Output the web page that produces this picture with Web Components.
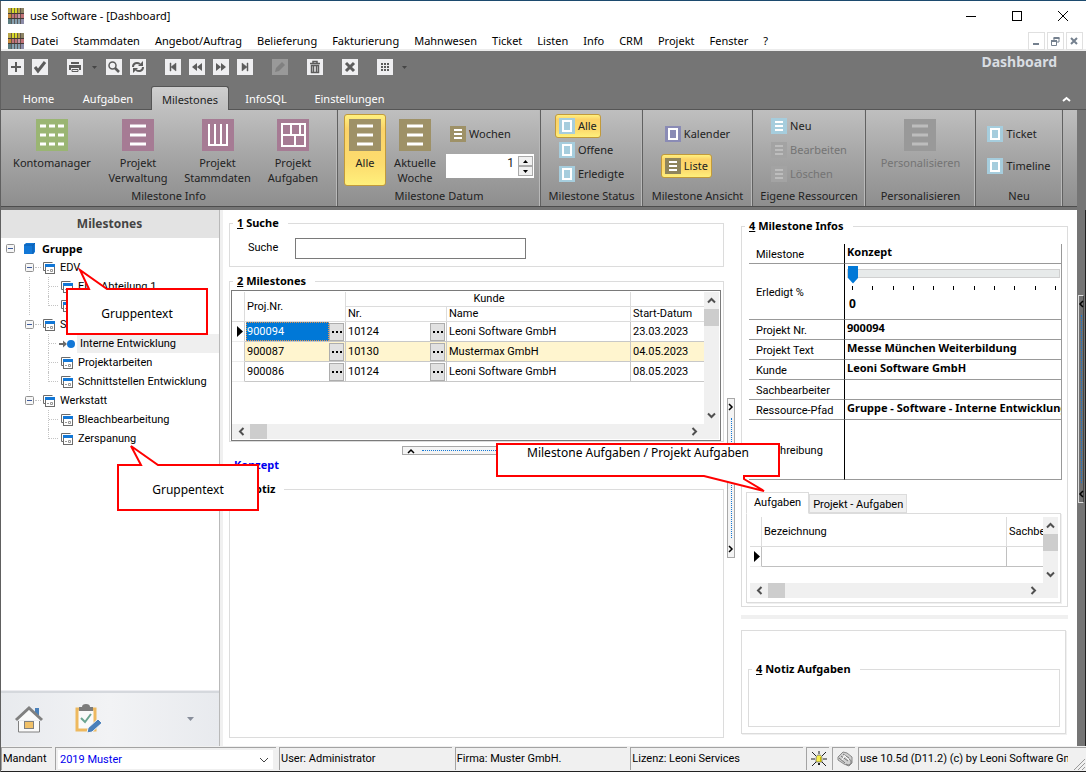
<!DOCTYPE html>
<html lang="de">
<head>
<meta charset="utf-8">
<title>use Software - [Dashboard]</title>
<style>
:root{--ui:"Noto Sans","Open Sans",sans-serif;--data:Roboto,"Noto Sans",sans-serif;--bold:"Noto Sans","Open Sans",sans-serif}
html,body{margin:0;min-height:100%}
body{font:11px/16px var(--data);color:#000;background:#fff}
</style>
</head>
<body>
<app-window></app-window>
<script>
const RESET = `*{box-sizing:border-box}button,input,select{font:inherit;color:inherit;margin:0;padding:0;border:0;background:none;border-radius:0}button{display:inline-flex;align-items:center;justify-content:center}svg{display:block;flex:none}`;
function define(name, css, html) {
  customElements.define(name, class extends HTMLElement {
    constructor() {
      super();
      this.attachShadow({ mode: 'open' }).innerHTML =
        `<style>${RESET}${css}</style>` + (typeof html === 'function' ? html(this) : html);
    }
  });
}

/* ---------- icons ---------- */
const svg = (w, h, body, extra = '') => `<svg width="${w}" height="${h}" viewBox="0 0 ${w} ${h}" aria-hidden="true" ${extra}>${body}</svg>`;
const LOGO = svg(16, 16, `
  <rect width="16" height="16" fill="#8a7a6c"/>
  <path d="M0 0h16v5H0z" fill="#b8a548"/><path d="M4 0h5v5H4z" fill="#d9d92a"/><path d="M12 0h4v5h-4z" fill="#8d8465"/>
  <path d="M0 6h16v4H0z" fill="#c07278"/><path d="M0 6h4v4H0z" fill="#c78a3c"/><path d="M9 6h3v4H9z" fill="#c792a5"/>
  <path d="M0 11h16v5H0z" fill="#86a0b0"/><path d="M0 11h3v5H0z" fill="#5c7e80"/><path d="M12 11h4v5h-4z" fill="#8c8ca8"/>
  <path d="M3.500 0v16M6.500 0v16M9.500 0v16M12.500 0v16" stroke="#4d4641" stroke-opacity=".75"/><path d="M0 5.500h16M0 10.500h16" stroke="#433a36"/>`);
const lines = (s, bg, fg) => s === 32
  ? svg(32, 32, `<rect width="32" height="32" fill="${bg}"/><path d="M8 7h16M8 16h16M8 25h16" stroke="${fg}" stroke-width="3"/>`)
  : svg(16, 16, `<rect width="16" height="16" fill="${bg}"/><path d="M4 4h8M4 8h8M4 12h8" stroke="${fg}" stroke-width="2"/>`);
const square = bg => svg(16, 16, `<rect width="16" height="16" fill="${bg}"/><rect x="4" y="3" width="8" height="10" fill="none" stroke="#fff" stroke-width="2"/>`);
const DIM = '#999', DIMFG = '#bdbdbd';
const ICONS = {
  konto: svg(32, 32, `<rect width="32" height="32" fill="#9ab573"/><path d="M4 7h24M4 16h24M4 25h24" stroke="#fff" stroke-width="3" stroke-dasharray="6 3"/>`),
  verwaltung: lines(32, '#a67b94', '#fff'),
  stammdaten: svg(32, 32, `<rect width="32" height="32" fill="#a67b94"/><path d="M7 5v21h18V5M13 5v20M19 5v20" fill="none" stroke="#fff" stroke-width="2"/>`),
  aufgaben: svg(32, 32, `<rect width="32" height="32" fill="#a67b94"/><path d="M5 5h23v22H5zM5 16h23M14 5v11M23 5v11M18 16v11" fill="none" stroke="#fff" stroke-width="2"/>`),
  olive: lines(32, '#9e9167', '#fff'), olive16: lines(16, '#9e9167', '#fff'), olivedark: lines(16, '#8f855c', '#fff'),
  dim: lines(32, DIM, DIMFG), dim16: lines(16, '#a3a3a3', '#bdbdbd'),
  blue: square('#a6cddd'), violet: square('#8a8bb5'), bluelines: lines(16, '#a6cddd', '#fff')
};
const QI = {
  add: '<path d="M8 3v10M3 8h10" stroke="#5c5c5c" stroke-width="2"/>',
  ok: '<path d="M3 8l3 4 7-9" fill="none" stroke="#5c5c5c" stroke-width="3"/>',
  print: '<path d="M4 3h8v2H4zM2 6h12v5h-2V9H4v2H2z" fill="#5c5c5c"/><path d="M5 10.500h6v2H5z" fill="none" stroke="#5c5c5c"/>',
  find: '<circle cx="6.500" cy="6.500" r="3.500" fill="none" stroke="#5c5c5c" stroke-width="1.500"/><path d="M9 9l4 4" stroke="#5c5c5c" stroke-width="2.500"/>',
  refresh: '<path d="M3 8c0-4 4-5 7-3M13 8c0 4-4 5-7 3" fill="none" stroke="#5c5c5c" stroke-width="2"/><path d="M13 2v5H8zM3 14V9h5z" fill="#5c5c5c"/>',
  first: '<path d="M5 4h1v8H5zM11 4v8L6 8z" fill="#5c5c5c" stroke="#5c5c5c" stroke-width=".5"/>',
  prev: '<path d="M8 4v8L3 8zM13 4v8L8 8z" fill="#5c5c5c"/>',
  next: '<path d="M3 4v8l5-4zM8 4v8l5-4z" fill="#5c5c5c"/>',
  last: '<path d="M10 4h1v8h-1zM5 4v8l5-4z" fill="#5c5c5c" stroke="#5c5c5c" stroke-width=".5"/>',
  edit: '<path d="M3 13l1-4 6-6 3 3-6 6z" fill="#808080"/>',
  trash: '<path d="M3 4.500h10M6 4V2.500h4V4M4.500 6.500h7v7h-7zM6.500 7v6M9.500 7v6" fill="none" stroke="#5c5c5c" stroke-width="1.500"/>',
  del: '<path d="M4 4l8 8M12 4l-8 8" stroke="#5c5c5c" stroke-width="3"/>',
  grid: '<path d="M4 4h2v2H4zM7 4h2v2H7zM10 4h2v2h-2zM4 7h2v2H4zM7 7h2v2H7zM10 7h2v2h-2zM4 10h2v2H4zM7 10h2v2H7zM10 10h2v2h-2z" fill="#5c5c5c"/>'
};
const quick = (n, t, off = false) => `<button aria-label="${t}" ${off ? 'disabled' : ''}>${svg(16, 16, `<rect width="16" height="16" fill="${off ? '#999' : '#efeff1'}"/>${QI[n]}`)}</button>`;
const CARET = '<button aria-label="Auswahl">' + svg(7, 16, '<path d="M1 7h5L3.500 10z" fill="#454545"/>') + '</button>';
const chev = (dir, color = '#505050') => svg(9, 9, `<path d="M1 6.500L4.500 3 8 6.500" fill="none" stroke="${color}" stroke-width="2" transform="rotate(${{ up: 0, right: 90, down: 180, left: 270 }[dir]} 4.500 4.500)"/>`);
const WINICON = svg(12, 12, '<path d="M.5 8.500v-8h9M.5 8.500h2" fill="none" stroke="#6b6b6b"/><rect x="2.500" y="2.500" width="9" height="9" fill="#fff" stroke="#6b6b6b"/><path d="M2 2h10v3H2z" fill="#1277d6"/><path d="M4 8.500h2M7.500 7.500h2v2h-2z" fill="none" stroke="#999"/>');

/* ---------- window chrome ---------- */
define('title-bar', `
  :host{display:flex;align-items:center;height:30px;padding:0 0 0 8px;background:#fff;font:11px/16px var(--ui)}
  h1{font:inherit;margin:0;padding-left:6px;flex:1}
  button{width:46px;height:30px}`,
  `${LOGO}<h1>use Software - [Dashboard]</h1>
  <button aria-label="Minimieren">${svg(12, 12, '<path d="M1 6.500h10" stroke="#000"/>')}</button>
  <button aria-label="Maximieren">${svg(12, 12, '<rect x="1.500" y="1.500" width="9" height="9" fill="none" stroke="#000"/>')}</button>
  <button aria-label="Schließen">${svg(12, 12, '<path d="M1 1l10 10M11 1L1 11" stroke="#000"/>')}</button>`);

define('menu-bar', `
  :host{display:flex;align-items:center;height:20px;padding:2px 3px 0 8px;border-bottom:2px solid #ececec;background:#fff;font:11px/16px var(--ui);white-space:nowrap}
  nav{display:flex;flex:1;gap:15px;padding-left:7px}
  .mdi{display:flex;gap:2px}.mdi button{width:17px;height:18px;border:1px solid #e0e0e0}`,
  `${LOGO}<nav>${['Datei', 'Stammdaten', 'Angebot/Auftrag', 'Belieferung', 'Fakturierung', 'Mahnwesen', 'Ticket', 'Listen', 'Info', 'CRM', 'Projekt', 'Fenster', '?'].map(t => `<button>${t}</button>`).join('')}</nav>
  <div class="mdi"><button aria-label="Minimieren">${svg(9, 9, '<path d="M1 7h6" stroke="#74808e" stroke-width="2"/>')}</button>
  <button aria-label="Wiederherstellen">${svg(9, 9, '<path d="M3 3V1h5v4H6" fill="none" stroke="#74808e"/><path d="M.5 4h5v4.500h-5z" fill="none" stroke="#74808e"/><path d="M0 4h6M2.500 1h6" stroke="#74808e" stroke-width="2"/>')}</button>
  <button aria-label="Schließen">${svg(9, 9, '<path d="M1 1l6 6M7 1L1 7" stroke="#74808e" stroke-width="2"/>')}</button></div>`);

define('quick-bar', `
  :host{display:flex;height:35px;padding:8px 29px 0 8px;background:#757575;color:#d9dde2}
  .g{display:flex;gap:8px;margin-right:19px;align-self:flex-start}
  h2{margin:-6px 0 0 auto;font:bold 14px/18px var(--ui)}`,
  `<div class="g">${quick('add', 'Neu')}${quick('ok', 'Speichern')}</div>
  <div class="g">${quick('print', 'Drucken')}${CARET}${quick('find', 'Suchen')}${quick('refresh', 'Aktualisieren')}</div>
  <div class="g">${quick('first', 'Erster')}${quick('prev', 'Zurück')}${quick('next', 'Weiter')}${quick('last', 'Letzter')}</div>
  <div class="g">${quick('edit', 'Bearbeiten', true)}</div><div class="g">${quick('trash', 'Löschen')}</div>
  <div class="g">${quick('del', 'Abbrechen')}</div><div class="g">${quick('grid', 'Raster')}${CARET}</div><h2>Dashboard</h2>`);

define('ribbon-tabs', `
  :host{display:flex;align-items:flex-end;height:24px;padding:0 15px 0 8px;background:#757575;border-bottom:1px solid #555;font:11px/16px var(--ui)}
  button{height:24px;margin-bottom:-1px;padding-top:2px;color:#fff}
  button[aria-selected=true]{color:#222;background:linear-gradient(#cfcfcf,#bebebe);border:1px solid #555;border-bottom:0;border-radius:3px 3px 0 0;margin-left:4px}
  .w60{width:61px}.w80{width:78px}.w78{width:78px}.w74{width:74px}.w92{width:93px}.up{margin-left:auto;width:10px}`,
  `<button class="w60" role="tab">Home</button><button class="w80" role="tab">Aufgaben</button><button class="w78" role="tab" aria-selected="true">Milestones</button><button class="w74" role="tab">InfoSQL</button><button class="w92" role="tab">Einstellungen</button>
  <button class="up" aria-label="Menüband einklappen">${svg(9, 9, '<path d="M1 6l3.500-3L8 6" fill="none" stroke="#fff" stroke-width="2"/>')}</button>`);

/* ---------- ribbon ---------- */
define('ribbon-button', `
  :host{display:block}
  button{font:11px/16px var(--ui);color:#222;white-space:nowrap;border:1px solid transparent;border-radius:3px}
  :host([big]) button{flex-direction:column;justify-content:flex-start;height:72px;width:100%;padding-top:4px}
  :host([big]) span{padding-top:4px;line-height:15px}
  :host(:not([big])) button{height:24px;padding:0 3px;gap:3px}
  :host([active]) button{background:linear-gradient(#fff17f,#fcd369 20%,#fcdc6e 70%,#fff07c);border-color:#c29a3a}
  button:disabled{color:#747474}`,
  el => `<button ${el.hasAttribute('off') ? 'disabled' : ''}>${ICONS[el.getAttribute('icon')]}<span><slot></slot></span></button>`);

define('ribbon-group', `
  :host{display:flex;flex-direction:column;border-right:1px solid #616161;box-shadow:inset -1px 0 #b9b9b9;font:11px/16px var(--ui);color:#222;flex:none;white-space:nowrap}
  :host(:last-child){flex:1;border:0;box-shadow:none}
  .body{display:flex;flex:1;justify-content:center;padding-top:4px}
  footer{text-align:center;height:18px}`,
  el => `<div class="body"><slot></slot></div><footer>${el.getAttribute('label') || ''}</footer>`);

define('ribbon-bar', `
  :host{display:flex;height:97px;background:linear-gradient(#bfbfbf,#a2a2a2 55%,#8e8e8e);border-bottom:1px solid #4d4d4d;font:11px/16px var(--ui);margin-bottom:3px}
  .stack{display:flex;flex-direction:column}
  .two{gap:8px;padding-top:8px}
  .datum{padding:8px 0 0 2px;gap:8px}
  .spin{display:flex;width:88px;height:24px;background:#fff;font:11px/16px var(--data)}
  .spin input{flex:1;min-width:0;text-align:right;height:18px;padding-right:4px;appearance:textfield;outline:0;font-size:12px}
  input::-webkit-inner-spin-button{display:none}
  .arrows{display:flex;flex-direction:column;padding:2px 1px 0 0}
  .arrows button{width:15px;height:10px;border:1px solid #aaa;background:#f0f0f0}
  .w338{width:338px}.w203{width:203px}.w102{width:102px}.w110{width:110px}.w113{width:113px}.w111{width:110px}.w87{width:87px}
  .b1{width:90px}.b2{width:82px}.b3{width:77px}.b4{width:74px}.b5{width:42px}.b6{width:58px}`,
  `<ribbon-group class="w338" label="Milestone Info">
    <ribbon-button big class="b1" icon="konto">Kontomanager</ribbon-button><ribbon-button big class="b2" icon="verwaltung">Projekt<br>Verwaltung</ribbon-button><ribbon-button big class="b3" icon="stammdaten">Projekt<br>Stammdaten</ribbon-button><ribbon-button big class="b4" icon="aufgaben">Projekt<br>Aufgaben</ribbon-button></ribbon-group>
  <ribbon-group class="w203" label="Milestone Datum">
    <ribbon-button big active class="b5" icon="olive">Alle</ribbon-button><ribbon-button big class="b6" icon="olive">Aktuelle<br>Woche</ribbon-button>
    <div class="stack datum"><ribbon-button icon="olive16">Wochen</ribbon-button>
    <div class="spin"><input type="number" value="1" aria-label="Wochen"><div class="arrows"><button aria-label="Mehr">${svg(5, 3, '<path d="M0 3h5L2.500 0z"/>')}</button><button aria-label="Weniger">${svg(5, 3, '<path d="M0 0h5L2.500 3z"/>')}</button></div></div></div></ribbon-group>
  <ribbon-group class="w102" label="Milestone Status"><div class="stack"><ribbon-button active icon="blue">Alle</ribbon-button><ribbon-button icon="blue">Offene</ribbon-button><ribbon-button icon="blue">Erledigte</ribbon-button></div></ribbon-group>
  <ribbon-group class="w110" label="Milestone Ansicht"><div class="stack two"><ribbon-button icon="violet">Kalender</ribbon-button><ribbon-button active icon="olivedark">Liste</ribbon-button></div></ribbon-group>
  <ribbon-group class="w113" label="Eigene Ressourcen"><div class="stack"><ribbon-button icon="bluelines">Neu</ribbon-button><ribbon-button off icon="dim16">Bearbeiten</ribbon-button><ribbon-button off icon="dim16">Löschen</ribbon-button></div></ribbon-group>
  <ribbon-group class="w111" label="Personalisieren"><ribbon-button big off icon="dim">Personalisieren</ribbon-button></ribbon-group>
  <ribbon-group class="w87" label="Neu"><div class="stack two"><ribbon-button icon="blue">Ticket</ribbon-button><ribbon-button icon="blue">Timeline</ribbon-button></div></ribbon-group>
  <ribbon-group></ribbon-group>`);

/* ---------- sidebar ---------- */
const ROWS = [[0, 'Gruppe', 'root'], [1, 'EDV', 'node'], [2, 'EDV Abteilung 1'], [2, 'EDV Abteilung 2', 'end'], [1, 'Software', 'node'], [2, 'Interne Entwicklung', 'sel'], [2, 'Projektarbeiten'], [2, 'Schnittstellen Entwicklung', 'end'], [1, 'Werkstatt', 'node'], [2, 'Bleachbearbeitung'], [2, 'Zerspanung', 'end']];
const BOX = svg(9, 9, '<rect x=".5" y=".5" width="8" height="8" rx="1" fill="#f6f6f6" stroke="#919191"/><path d="M2 4.500h5" stroke="#3c5a9c"/>');
const treeRow = ([lv, text, kind = ''], i) => {
  if (lv === 0) return `<li class="root">${BOX}${svg(11, 12, '<path d="M0 2l2-2h9v9l-2 2H0z" fill="#1277d6"/><path d="M0 2h9v9M9 2l2-2" fill="none" stroke="#0c5cab"/>')}<b>${text}</b></li>`;
  if (lv === 1) return `<li class="node">${BOX}<i class="h"></i>${WINICON}<span>${text}</span></li>`;
  const ic = kind === 'sel' ? svg(17, 12, '<path d="M0 6h5" stroke="#6b6b6b" stroke-width="2"/><path d="M4 2.500L8 6 4 9.500z" fill="#6b6b6b"/><circle cx="12" cy="6" r="4" fill="#1277d6"/>') : WINICON;
  return `<li class="leaf ${kind}"><i class="${i < 8 ? 'v' : 'v none'}"></i><i class="v2 ${kind === 'end' ? 'half' : ''}"></i><i class="h"></i>${ic}<span>${text}</span></li>`;
};
define('group-tree', `
  :host{display:block;flex:1}
  ul{list-style:none;margin:0;padding:1px 0 0}
  li{display:flex;align-items:center;height:19px;line-height:19px;white-space:nowrap}
  i{align-self:stretch;border-left:1px dotted #c4c4c4}
  .h{align-self:center;width:6px;border:0;border-top:1px dotted #c4c4c4}
  .root{padding-left:6px;gap:9px}.root b{font:bold 11px/19px var(--bold);margin-left:-2px}
  .node{padding-left:25px}.node .h{margin:0 2px 0 1px}.node span{padding-left:5px}
  .leaf{padding-left:29px}.leaf .v2{margin-left:18px}.leaf .h{width:9px;margin-right:3px}.leaf span{padding:0 0 0 3px;margin-left:2px;flex:1}
  .half{align-self:flex-start;height:10px}.none{border-color:transparent}
  .leaf.sel .h{width:7px;margin-right:3px}.leaf.sel span{background:#efefef;margin-left:1px}`,
  `<ul>${ROWS.map(treeRow).join('')}</ul>`);

define('side-panel', `
  :host{display:flex;flex-direction:column;background:#fff;border-right:1px solid #b9b9b9}
  h2{margin:0;height:28px;background:#e3e3e3;font:bold 12px/28px var(--ui);color:#444;text-align:center}
  footer{display:flex;align-items:center;height:56px;padding:0 24px 0 14px;background:linear-gradient(90deg,#e8eaee,#f2f3f5 50%,#e8eaee);border-top:1px solid #ececf0;box-shadow:inset 0 2px #d5d8dd}
  footer button{margin-right:31px}footer button:last-child{margin:0 0 0 auto}`,
  `<h2>Milestones</h2><group-tree></group-tree>
  <footer><button aria-label="Start">${svg(30, 30, '<path d="M21 4h4v7h-4z" fill="#4a80ba"/><path d="M4.500 17v11h21V17" fill="#fafafa" stroke="#808080"/><path d="M2 16L15 4l13 12" fill="#fafafa" stroke="#808080" stroke-width="3"/><rect x="10.500" y="17.500" width="9" height="7" fill="#f0c068" stroke="#808080"/>')}</button>
  <button aria-label="Aufgaben">${svg(28, 30, '<path d="M2 5h18v21H2z" fill="#fafafa" stroke="#eeb95f" stroke-width="3"/><path d="M4 3h3a4 3 0 0 1 8 0h3v4H4z" fill="#7c7c7c"/><path d="M6 14l4 4 6-8" fill="none" stroke="#6ba591" stroke-width="2"/><path d="M13 24l10-9 4 4-10 9-5 1z" fill="#4a80ba" stroke="#f4f5f7"/>')}</button>
  <button aria-label="Weitere">${svg(9, 8, '<path d="M1 2h7L4.500 6z" fill="#888e9b"/>')}</button></footer>`);

/* ---------- framed group with a caption ---------- */
define('group-box', `
  :host{display:flex;flex-direction:column;min-width:0}
  fieldset{flex:1;min-width:0;margin:0;padding:0;border:1px solid #dcdcdc;display:flex;flex-direction:column}
  legend{margin-left:3px;padding:0 9px 0 4px;font:bold 11px/14px var(--bold);height:14px}
  u{text-decoration-thickness:1px;text-underline-offset:1px}`,
  el => `<fieldset><legend><u>${el.getAttribute('num')}</u> ${el.getAttribute('label')}</legend><slot></slot></fieldset>`);

/* ---------- scroll frame shared by both grids ---------- */
define('scroll-frame', `
  :host{display:grid;grid-template-columns:minmax(0,1fr) 15px;grid-template-rows:1fr 15px;background:#fff;padding:1px 1px 1px 0}
  .c{overflow:hidden;min-width:0}
  .v,.h{background:#f0f0f0;display:flex;align-items:center}
  .v{flex-direction:column;padding:4px 0}.h{grid-column:1/3;padding:0 20px 0 5px}
  .v i{width:15px;height:17px;background:#cdcdcd;margin-top:4px}.h i{width:17px;height:15px;background:#cdcdcd;margin-left:4px}
  .v button:last-child{margin:auto 0 0}.h button:last-child{margin:0 0 0 auto}`,
  `<div class="c"><slot></slot></div>
  <div class="v"><button aria-label="Hoch">${chev('up')}</button><i></i><button aria-label="Runter">${chev('down')}</button></div>
  <div class="h"><button aria-label="Links">${chev('left')}</button><i></i><button aria-label="Rechts">${chev('right')}</button></div>`);

const PTR = svg(7, 12, '<path d="M1 0v11l6-5.500z"/>');
const DOTS = '<button aria-label="Auswählen">' + svg(10, 2, '<path d="M0 0h2v2H0zM4 0h2v2H4zM8 0h2v2H8z"/>') + '</button>';
define('milestone-grid', `
  :host{display:block;margin:2px 2px 0 1px;border:1px solid #7a7a7a;height:151px}
  scroll-frame{height:149px}
  table{border-collapse:separate;border-spacing:0;table-layout:fixed;width:100%}
  th,td{padding:0 0 0 2px;text-align:left;font-weight:normal;border-right:1px solid #c8c8c8;border-bottom:1px solid #c8c8c8;white-space:nowrap;overflow:hidden}
  th:last-child,td:last-child{border-right:0}
  th{border-color:#dcdcdc}thead tr:first-child th{height:15px;line-height:14px}thead tr+tr th{height:15px;line-height:14px}
  .mid{text-align:center}
  tbody td{height:20px;line-height:19px}
  td:first-child{padding-left:4px;border-bottom-color:#ececec}
  .alt td+td{background:#fff5cf}
  .f{display:flex;align-items:center;justify-content:space-between;height:19px}
  .f button{width:15px;height:18px;background:#e1e1e1;border:1px solid #adadad;margin-right:1px}
  .on{background:#0078d7;color:#fff;outline:1px dotted #e8954a;outline-offset:-1px;flex:1;height:19px;margin-left:-1px;padding-left:1px}`,
  `<scroll-frame><table><colgroup><col style="width:13px"><col style="width:101px"><col style="width:101px"><col><col style="width:73px"></colgroup>
  <thead><tr><th rowspan="2"></th><th rowspan="2">Proj.Nr.</th><th colspan="2" class="mid">Kunde</th><th></th></tr><tr><th>Nr.</th><th>Name</th><th>Start-Datum</th></tr></thead>
  <tbody>${[['900094', '10124', 'Leoni Software GmbH', '23.03.2023'], ['900087', '10130', 'Mustermax GmbH', '04.05.2023'], ['900086', '10124', 'Leoni Software GmbH', '08.05.2023']].map((r, i) =>
    `<tr class="${i === 1 ? 'alt' : ''}"><td>${i ? '' : PTR}</td><td><div class="f"><span class="${i ? '' : 'on'}">${r[0]}</span>${DOTS}</div></td><td><div class="f"><span>${r[1]}</span>${DOTS}</div></td><td>${r[2]}</td><td>${r[3]}</td></tr>`).join('')}</tbody></table></scroll-frame>`);

define('split-handle', `
  :host{display:flex;align-items:center;justify-content:space-between;background:#f4f4f4;border:1px solid #a8a8a8;width:150px;height:9px}
  :host([vertical]){flex-direction:column;width:8px;height:160px}
  :host([dark]){width:6px;height:208px;background:#707070;border-color:#ddd;border-right-color:#444}
  i{flex:1;align-self:center;border-top:1px dotted #1277d6;margin:0 3px}
  :host([vertical]) i{border:0;border-left:1px dotted #1277d6;margin:3px 0}
  svg{margin:4px}:host([vertical]) svg{margin:4px -2px}`,
  el => { const d = el.hasAttribute('dark') ? 'left' : el.hasAttribute('vertical') ? 'right' : 'up';
    const c = svg(8, 8, `<path d="M1 6l3-3 3 3" fill="none" stroke="#000" stroke-width="1.500" transform="rotate(${{ up: 0, right: 90, left: 270 }[d]} 4 4)"/>`);
    return `${c}<i></i>${c}`; });

/* ---------- detail table with slider ---------- */
define('milestone-info', `
  :host{display:block;margin:11px 5px 0 7px}
  table{width:100%;table-layout:fixed;border-collapse:separate;border-spacing:0;border-right:1px solid #999}
  th,td{border-bottom:1px solid #999;height:20px;padding:0;text-align:left;white-space:nowrap;overflow:hidden}
  th{font-weight:normal;padding:2px 0 0 7px;border-right:1px solid #000}
  td{font:bold 11px/15px var(--bold);padding-left:2px;vertical-align:top}
  .big th,.big td{height:56px}.last th,.last td{height:60px}
  input{display:block;appearance:none;width:100%;height:20px;outline:0;margin-top:1px}
  input::-webkit-slider-runnable-track{height:9px;margin:0 1px 4px 0;background:#e7eaea;border:1px solid #d0d0d0}
  input::-webkit-slider-thumb{appearance:none;width:10px;height:18px;margin-top:-4px;background:#0078d7;clip-path:polygon(0 0,100% 0,100% 70%,50% 100%,0 70%)}
  .ticks{display:flex;justify-content:space-between;padding:1px 5px 6px}.ticks i{width:1px;height:4px;background:#000}
  output{padding-left:2px;font-size:12px}`,
  `<table><colgroup><col style="width:96px"><col></colgroup>
  <tr><th>Milestone</th><td>Konzept</td></tr>
  <tr class="big"><th><label for="s">Erledigt %</label></th><td><input id="s" type="range" min="0" max="100" value="0"><div class="ticks">${'<i></i>'.repeat(11)}</div><output for="s">0</output></td></tr>
  <tr><th>Projekt Nr.</th><td>900094</td></tr><tr><th>Projekt Text</th><td>Messe München Weiterbildung</td></tr>
  <tr><th>Kunde</th><td>Leoni Software GmbH</td></tr><tr><th>Sachbearbeiter</th><td></td></tr>
  <tr><th>Ressource-Pfad</th><td>Gruppe - Software - Interne Entwicklung</td></tr>
  <tr class="last"><th>Beschreibung</th><td></td></tr></table>`);

define('task-tabs', `
  :host{display:block;margin:12px 6px 0 4px}
  .tabs{display:flex;align-items:flex-end;height:21px;position:relative}
  button{border:1px solid #dcdcdc;height:19px;padding:2px 3px 0;background:#f0f0f0}
  button[aria-selected=true]{background:#fff;height:22px;padding:0 7px;border-bottom-color:#fff;margin-bottom:-1px}
  .pane{border:1px solid #dcdcdc;box-shadow:1px 1px #f0f0f0;padding:2px 1px 3px 3px}
  scroll-frame{height:83px}
  table{width:100%;table-layout:fixed;border-collapse:separate;border-spacing:0}
  th,td{padding:0 0 0 2px;text-align:left;font-weight:normal;border-right:1px solid #dcdcdc;border-bottom:1px solid #dcdcdc;white-space:nowrap;overflow:hidden}
  th{height:30px}td{height:20px;border-color:#c0c0c0}td:first-child{padding-left:3px;border-bottom-color:#ececec}th:last-child,td:last-child{border-right:0}
  .c{width:12px}.d{width:36px}`,
  `<div class="tabs" role="tablist"><button role="tab" aria-selected="true">Aufgaben</button><button role="tab">Projekt - Aufgaben</button></div>
  <div class="pane"><scroll-frame><table><colgroup><col class="c"><col><col class="d"></colgroup><tr><th></th><th>Bezeichnung</th><th>Sachbearbeiter</th></tr><tr><td>${PTR}</td><td></td><td></td></tr></table></scroll-frame></div>`);

/* ---------- annotation bubble: red outline with a pointer ---------- */
define('call-out', `
  :host{position:absolute;display:block}
  svg{overflow:visible;position:absolute;inset:0}
  p{position:absolute;inset:0;margin:0;padding-top:var(--drop,18px);text-align:center;font:12px/16px var(--ui)}`,
  el => { const w = +el.getAttribute('w'), h = +el.getAttribute('h');
    el.style.width = w + 'px'; el.style.height = h + 'px';
    return svg(w, h, `<path d="M1 1${el.getAttribute('top') || ''}H${w - 1}V${h - 1}${el.getAttribute('bottom') || ''}H1z" fill="#fff" stroke="#f00" stroke-width="2"/>`) + '<p><slot></slot></p>'; });

/* ---------- status bar ---------- */
define('status-bar', `
  :host{display:flex;gap:3px;height:26px;background:#f0f0f0;padding:1px 0 1px 1px;border-bottom:1px solid #222;white-space:nowrap}
  div{border:1px solid #a3a3a3;border-width:1px 0 0 1px;padding-left:1px;line-height:22px;flex:1 1 0;overflow:hidden;display:flex;align-items:center}
  .m{flex:0 0 51px}.s{flex:0 0 221px;padding:1px 3px 0 2px}.i{flex:0 0 23px;justify-content:center}.v{flex:0 0 228px;position:relative;padding-right:18px}
  .v span{overflow:hidden}
  .v svg{position:absolute;right:1px;bottom:0}
  .s .box{position:relative;border:0;padding:0;height:19px;line-height:18px}
  select{width:100%;height:19px;background:#fff;color:#00e;appearance:none;padding-left:2px}
  .box svg{position:absolute;right:4px;top:7px;pointer-events:none}`,
  `<div class="m"><label for="m">Mandant</label></div><div class="s"><div class="box"><select id="m"><option>2019 Muster</option></select>${svg(10, 7, '<path d="M1 1l4 4 4-4" fill="none" stroke="#444"/>')}</div></div>
  <div>User: Administrator</div><div>Firma: Muster GmbH.</div><div>Lizenz: Leoni Services</div>
  <div class="i">${svg(16, 16, '<path d="M1 1l4 4M15 1l-4 4M8 0v3M0 8h4M12 8h4M1 15l4-4M15 15l-4-4" stroke="#222"/><path d="M5 11c0-5 0-7 3-7s3 2 3 7z" fill="#f7ef4c" stroke="#555" stroke-width=".7"/><path d="M9 6h1v5H9z" fill="#c9b900"/><path d="M7 13h2" stroke="#222" stroke-width="2"/>')}</div>
  <div class="i">${svg(16, 16, '<path d="M1 6l5-5 4 1 5 4v6l-3 3-5-2-6-4z" fill="#d0d0d0" stroke="#888"/><path d="M2 7l6 5M4 5l7 5M6 3l6 4M12 8a3 3 0 1 1-3 5" fill="none" stroke="#777"/><path d="M8 5l4 4M5 9l3-5" stroke="#fff"/>')}</div>
  <div class="v"><span>use 10.5d (D11.2) (c) by Leoni Software GmbH</span>${svg(12, 12, '<path d="M1 12L12 1M5 12l7-7M9 12l3-3" stroke="#999"/>')}</div>`);

/* ---------- dashboard ---------- */
define('dashboard-view', `
  :host{display:grid;grid-template-columns:220px minmax(0,504px) 14px minmax(0,1fr) 9px;flex:1;position:relative;background:#fff}
  .center{display:flex;flex-direction:column;border-left:3px solid #f0f0f0;padding:6px 0 8px 6px}
  .search{display:flex;align-items:center;padding:7px 0 7px 18px;gap:17px;height:36px}
  .search input{width:231px;height:21px;border:1px solid #7a7a7a;padding:0 4px;outline:0}
  .search label{width:30px}
  .mil{margin-top:7px}
  split-handle:not([vertical]){align-self:center;margin-top:4px}
  .k{font:bold 11px/14px var(--bold);color:#00e;margin:3px 0 10px 5px}
  .grow{flex:1}
  .sp{display:flex;justify-content:center;padding:188px 0 0}
  .right{padding:9px 9px 12px 3px;display:flex;flex-direction:column}
  .info task-tabs{margin-bottom:3px}
  hr{border:0;margin:8px 0 11px;height:4px;background:#f0f0f0;width:100%}
  .notes{border:1px solid #dcdcdc;box-shadow:1px 1px #f0f0f0;padding:31px 5px 6px 6px;margin-right:2px;flex:1;display:flex}
  .notes group-box{flex:1}
  .edge{background:#757575;border-right:1px solid #222;padding:85px 0 0 1px}
  .c1{left:66px;top:78px}.c2{left:117px;top:254px}.c3{left:496px;top:233px;--drop:2px}`,
  `<side-panel></side-panel>
  <div class="center"><group-box num="1" label="Suche"><div class="search"><label for="q">Suche</label><input id="q" type="text"></div></group-box>
  <group-box class="mil" num="2" label="Milestones"><milestone-grid></milestone-grid></group-box>
  <split-handle></split-handle><div class="k">Konzept</div><group-box class="grow" num="3" label="Notiz"></group-box></div>
  <div class="sp"><split-handle vertical></split-handle></div>
  <div class="right"><group-box class="info" num="4" label="Milestone Infos"><milestone-info></milestone-info><task-tabs></task-tabs></group-box><hr>
  <div class="notes"><group-box num="4" label="Notiz Aufgaben"></group-box></div></div>
  <div class="edge"><split-handle vertical dark></split-handle></div>
  <call-out class="c1" w="142" h="47" top="H23L14 -18L41 1">Gruppentext</call-out>
  <call-out class="c2" w="142" h="47" top="H24L14 -18L41 1">Gruppentext</call-out>
  <call-out class="c3" w="284" h="34" bottom="H248V36L268 48L208 33">Milestone Aufgaben / Projekt Aufgaben</call-out>`);

define('app-window', `
  :host{display:flex;flex-direction:column;box-sizing:border-box;min-height:100vh;border-top:1px solid #1c4a6e;background:#fff;position:relative}
  :host::after{content:"";position:absolute;left:0;top:0;bottom:0;width:1px;background:#606060}
  .rib{background:#757575;padding-right:9px}quick-bar,ribbon-tabs{margin-right:-9px}`,
  `<title-bar></title-bar><menu-bar></menu-bar><div class="rib"><quick-bar></quick-bar><ribbon-tabs></ribbon-tabs><ribbon-bar></ribbon-bar></div>
  <dashboard-view></dashboard-view><status-bar></status-bar>`);
</script>
</body>
</html>
